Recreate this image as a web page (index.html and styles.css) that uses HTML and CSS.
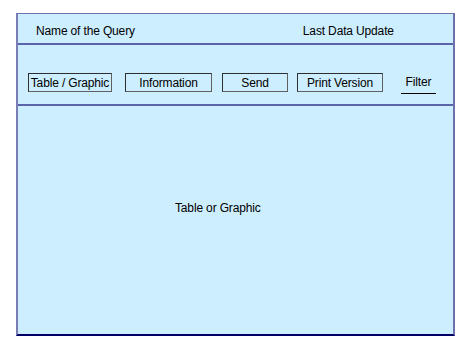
FILE: index.html
```html
<!DOCTYPE html>
<html lang="en">
<head>
    <meta charset="UTF-8">
    <title>Query</title>
    <link rel="stylesheet" href="styles.css">
</head>
<body>
    <div id="frame">
        <div id="head">
            <span class="queryName">Name of the Query</span>
            <span class="lastUpdate">Last Data Update</span>
        </div>

        <div id="tools">
            <div class="btn btnTable">Table / Graphic</div>
            <div class="btn btnInfo">Information</div>
            <div class="btn btnSend">Send</div>
            <div class="btn btnPrint">Print Version</div>
            <div class="filter">Filter</div>
        </div>

        <div id="content">
            <span>Table or Graphic</span>
        </div>
    </div>
</body>
</html>
```

FILE: styles.css
```css
*{
    margin: 0;
    padding: 0;
    box-sizing: border-box;
    font-family: 'Liberation Sans', Arial, sans-serif;
}

body{
    background: #fff;
    font-size: 12px;
    letter-spacing: -0.15px;
    color: #000;
}

#frame{
    width: 439px;
    height: 323px;
    margin-top: 13px;
    margin-left: 16px;

    background: #cdeeff;
    border-top: 1px solid #6d70aa;
    border-left: 2px solid #7a7db5;
    border-right: 2px solid #6d70aa;
    border-bottom: 2px solid #000066;

    display: flex;
    flex-direction: column;
}

#head{
    height: 31px;
    border-bottom: 2px solid #5a64a8;
    display: flex;
    padding-top: 10px;
    padding-left: 18px;
}
#head .lastUpdate{
    margin-left: 168px;
}

#tools{
    height: 61px;
    border-bottom: 2px solid #5a64a8;
    display: flex;
    align-items: flex-start;
    padding-top: 28px;
    padding-left: 10px;
}

.btn{
    height: 19px;
    line-height: 18px;
    text-align: center;
    border: 1px solid #2e2e2e;
    border-right-color: #5f5f5f;
    border-bottom-color: #5f5f5f;
}
.btnTable{ width: 84px; }
.btnInfo{ width: 87px; margin-left: 13px; }
.btnSend{ width: 66px; margin-left: 10px; }
.btnPrint{ width: 86px; margin-left: 9px; }

.filter{
    width: 35px;
    height: 21px;
    line-height: 19px;
    margin-left: 18px;
    text-align: center;
    border-bottom: 1px solid #000;
}

#content{
    flex: 1;
    padding-top: 95px;
    padding-left: 157px;
}
```
